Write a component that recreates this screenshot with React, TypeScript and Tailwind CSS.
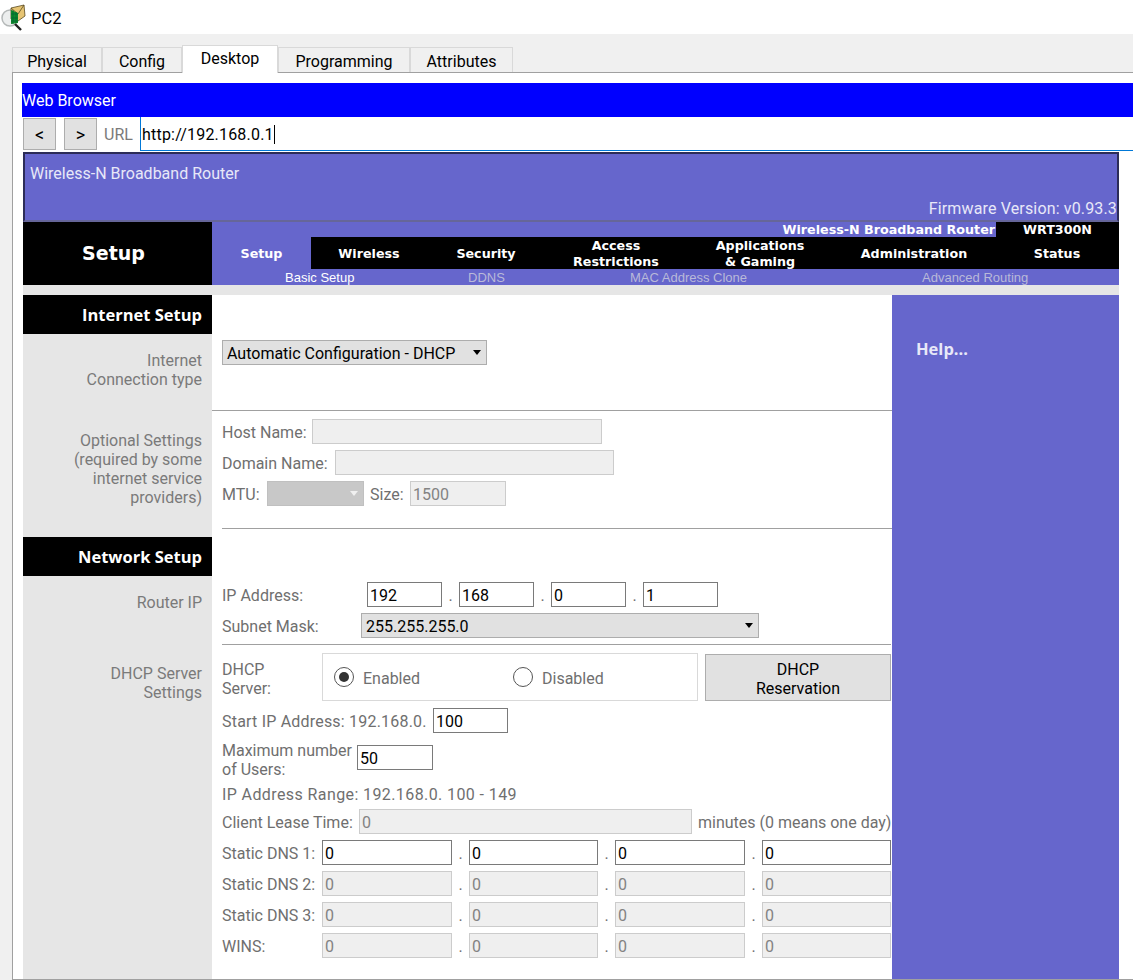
import type { ReactNode } from 'react'

const ui = "font-['Roboto','Liberation_Sans',sans-serif]"
const heading = "font-['Open_Sans','Liberation_Sans',sans-serif] font-bold"
const verdana = "font-['DejaVu_Sans',sans-serif] font-bold"

function PtIcon() {
  return (
    <svg width="29" height="30" viewBox="0 0 29 30" className="shrink-0">
      <circle cx="9" cy="16" r="8" fill="#eceeee" stroke="#b4b8b8" strokeWidth="1.5" />
      <path d="M14 22l6 6" stroke="#222" strokeWidth="2.4" />
      <path d="M10 6l13-3 1 11-7 5-7-2z" fill="#e6c473" stroke="#5a4a20" strokeWidth="0.8" />
      <path d="M10 6l7 6 6-9" fill="none" stroke="#5a4a20" strokeWidth="0.8" />
      <path d="M10 8l7 3v10l-7 1z" fill="#0f8a2a" />
      <path d="M10 12h7M10 16h7M10 19h7M12 8v14M15 10v11" stroke="#063" strokeWidth="0.7" />
    </svg>
  )
}

function Tab({ label, active, width }: { label: string; active?: boolean; width: string }) {
  if (active) {
    return (
      <div className={`${width} h-[28px] -mt-[2px] -mb-[1px] bg-white border border-b-0 border-[#d9d9d9] text-center text-[16px] leading-[25px] text-black relative`}>
        {label}
      </div>
    )
  }
  return (
    <div className={`${width} h-[25px] bg-[#f0f0f0] border border-b-0 border-[#d9d9d9] text-center text-[16px] leading-[27px] text-black`}>
      {label}
    </div>
  )
}

function Field({ value, width, off }: { value?: string; width: string; off?: boolean }) {
  return (
    <input
      readOnly
      value={value ?? ''}
      className={`${width} h-[25px] shrink-0 pl-[2px] pt-[2px] text-[16px] outline-none ${ui} ${
        off ? 'border border-[#cccccc] bg-[#efefef] text-[#838383]' : 'border border-[#7a7a7a] bg-white text-black'
      }`}
    />
  )
}

function Caret({ color = '#000' }: { color?: string }) {
  return (
    <svg width="8" height="5" viewBox="0 0 8 5" className="shrink-0">
      <path d="M0 0h8L4 5z" fill={color} />
    </svg>
  )
}

function Dropdown({ value, width, off }: { value?: string; width: string; off?: boolean }) {
  return (
    <div
      className={`${width} h-[25px] shrink-0 flex items-center justify-between pl-[4px] pr-[5px] text-[16px] ${
        off ? 'border border-[#c0c0c0] bg-[#c8c8c8]' : 'border border-[#adadad] bg-[#e1e1e1] text-black'
      }`}
    >
      <span className="pt-[2px]">{value}</span>
      <Caret color={off ? '#f0f0f0' : '#000'} />
    </div>
  )
}

function Row({ className, children }: { className: string; children: ReactNode }) {
  return <div className={`flex items-center text-[#6f6f6f] text-[16px] [&>span]:pt-[2px] ${className}`}>{children}</div>
}

function Dot({ width }: { width: string }) {
  return <span className={`${width} shrink-0 text-center text-[#6f6f6f]`}>.</span>
}

function DnsRow({ label, className, off }: { label: string; className: string; off?: boolean }) {
  return (
    <Row className={`h-[25px] ${className}`}>
      <span className="w-[100px] shrink-0">{label}</span>
      <Field value="0" width="w-[130px]" off={off} />
      <Dot width="w-[17px]" />
      <Field value="0" width="w-[129px]" off={off} />
      <Dot width="w-[17px]" />
      <Field value="0" width="w-[130px]" off={off} />
      <Dot width="w-[17px]" />
      <Field value="0" width="w-[129px]" off={off} />
    </Row>
  )
}

function Radio({ on }: { on?: boolean }) {
  return (
    <span className="w-[20px] h-[20px] shrink-0 rounded-full border border-[#555] bg-white flex items-center justify-center">
      {on && <span className="w-[10px] h-[10px] rounded-full bg-[#333]" />}
    </span>
  )
}

function SideHeading({ label }: { label: string }) {
  return (
    <div className={`h-[39px] bg-black text-white text-[16.5px] text-right pr-[10px] leading-[40px] ${heading}`}>{label}</div>
  )
}

function Sidebar() {
  return (
    <div className="w-[189px] shrink-0 bg-[#e6e6e6] text-right text-[16px] leading-[19px] text-[#7a7a7a]">
      <SideHeading label="Internet Setup" />
      <div className="h-[203px] pr-[10px] pt-[17px]">
        <p>Internet</p>
        <p>Connection type</p>
        <div className="h-[42px]" />
        <p>Optional Settings</p>
        <p>(required by some</p>
        <p>internet service</p>
        <p>providers)</p>
      </div>
      <SideHeading label="Network Setup" />
      <div className="pr-[10px] pt-[17px]">
        <p>Router IP</p>
        <div className="h-[52px]" />
        <p>DHCP Server</p>
        <p>Settings</p>
      </div>
    </div>
  )
}

function NavItem({ children, width, active }: { children: ReactNode; width: string; active?: boolean }) {
  return (
    <div className={`${width} shrink-0 text-center ${active ? 'bg-[#6666cc]' : ''}`}>{children}</div>
  )
}

export default function App() {
  return (
    <div className={`w-[1133px] h-[980px] overflow-hidden bg-[#f0f0f0] ${ui}`}>
      {/* window title */}
      <div className="h-[34px] bg-white flex items-center pl-[1px] gap-[1px] text-[16.5px] text-black">
        <PtIcon />
        <span className="pt-[4px]">PC2</span>
      </div>

      {/* tabs */}
      <div className="flex h-[38px] pl-[12px] pt-[13px]">
        <Tab label="Physical" width="w-[90px]" />
        <Tab label="Config" width="w-[80px]" />
        <Tab label="Desktop" width="w-[96px]" active />
        <Tab label="Programming" width="w-[132px]" />
        <Tab label="Attributes" width="w-[103px]" />
      </div>

      {/* device panel */}
      <div className="ml-[12px] h-[908px] bg-white border-t border-l border-b border-[#a0a0a0] pl-[9px] pt-[10px]">
        <div className="h-[34px] bg-[#0000ff] text-white text-[16px] leading-[36px]">Web Browser</div>
        <div className="h-[35px] flex items-start pl-[1px]">
          <button className="mt-[1px] w-[33px] h-[32px] bg-[#e1e1e1] border border-[#adadad] text-[18px] text-black">&lt;</button>
          <button className="mt-[1px] ml-[8px] w-[33px] h-[32px] bg-[#e1e1e1] border border-[#adadad] text-[18px] text-black">&gt;</button>
          <span className="ml-[7px] w-[36px] shrink-0 text-[16px] leading-[36px] text-[#7a7a7a]">URL</span>
          <div className="flex-1 h-[34px] bg-white border-l border-b border-[#0078d7] pl-[1px] pt-[2px] flex items-center text-[16px] tracking-[0.2px] text-black">
            http://192.168.0.1<span className="w-px h-[19px] bg-black" />
          </div>
        </div>

        {/* router page */}
        <div className="w-[1096px] ml-[1px] h-[827px]">
          <div className="h-[70px] bg-[#6666cc] border-2 border-t-[2px] border-[#2c2c58] border-b-[#666699] text-[#e8e8f8] text-[16px] flex flex-col justify-between pl-[5px]">
            <span className="leading-[19px] mt-[10px]">Wireless-N Broadband Router</span>
            <span className="self-end leading-[19px] mb-[2px] tracking-[0.15px]">Firmware Version: v0.93.3</span>
          </div>

          <div className="flex h-[63px]">
            <div className={`w-[189px] shrink-0 bg-black text-white text-[19px] leading-[63px] text-center pr-[8px] ${verdana}`}>Setup</div>
            <div className={`flex-1 bg-[#6666cc] text-white text-[12.7px] ${verdana}`}>
              <div className="h-[15px] flex justify-end leading-[15px]">
                <span className="pr-[1px] text-right">Wireless-N Broadband Router</span>
                <span className="w-[123px] bg-black text-center">WRT300N</span>
              </div>
              <div className="h-[32px] bg-black flex items-center pt-[2px] leading-[16px]">
                <NavItem width="w-[99px] self-stretch -mt-[2px] leading-[34px]" active>Setup</NavItem>
                <NavItem width="w-[116px]">Wireless</NavItem>
                <NavItem width="w-[118px]">Security</NavItem>
                <NavItem width="w-[142px]">Access<br />Restrictions</NavItem>
                <NavItem width="w-[146px]">Applications<br />&amp; Gaming</NavItem>
                <NavItem width="w-[162px]">Administration</NavItem>
                <NavItem width="w-[124px]">Status</NavItem>
              </div>
              <div className="h-[16px] flex leading-[18px] text-[13px] font-normal text-[#b9b9d9] font-['Liberation_Sans',sans-serif]">
                <span className="ml-[73px] w-[183px] text-white">Basic Setup</span>
                <span className="w-[162px]">DDNS</span>
                <span className="w-[292px]">MAC Address Clone</span>
                <span>Advanced Routing</span>
              </div>
            </div>
          </div>

          <div className="h-[10px] bg-[#e6e6e6]" />

          <div className="flex h-[684px]">
            <Sidebar />

            {/* form */}
            <div className="w-[680px] shrink-0 bg-white">
              <div className="ml-[10px] mt-[45px]">
                <Dropdown value="Automatic Configuration - DHCP" width="w-[265px]" />
              </div>
              <div className="h-px bg-[#a0a0a0] mt-[45px]" />

              <div className="pl-[10px]">
                <Row className="mt-[8px] h-[25px]">
                  <span className="w-[90px]">Host Name:</span>
                  <Field width="w-[290px]" off />
                </Row>
                <Row className="mt-[6px] h-[25px]">
                  <span className="w-[113px]">Domain Name:</span>
                  <Field width="w-[279px]" off />
                </Row>
                <Row className="mt-[6px] h-[25px]">
                  <span className="w-[45px]">MTU:</span>
                  <Dropdown width="w-[97px]" off />
                  <span className="ml-[6px] w-[40px]">Size:</span>
                  <Field value="1500" width="w-[96px]" off />
                </Row>
                <div className="h-px bg-[#a0a0a0] mt-[22px]" />

                <Row className="mt-[53px] h-[25px]">
                  <span className="w-[145px]">IP Address:</span>
                  <Field value="192" width="w-[75px]" />
                  <Dot width="w-[17px]" />
                  <Field value="168" width="w-[75px]" />
                  <Dot width="w-[17px]" />
                  <Field value="0" width="w-[75px]" />
                  <Dot width="w-[17px]" />
                  <Field value="1" width="w-[75px]" />
                </Row>
                <Row className="mt-[6px] h-[25px]">
                  <span className="w-[139px]">Subnet Mask:</span>
                  <Dropdown value="255.255.255.0" width="w-[398px]" />
                </Row>
                <div className="h-px bg-[#a0a0a0] mt-[6px] mr-[1px]" />

                <Row className="mt-[8px] h-[48px]">
                  <div className="w-[100px] leading-[19px] pt-[4px]">DHCP<br />Server:</div>
                  <div className="w-[376px] h-[48px] shrink-0 border border-[#d9d9d9] flex items-center pl-[11px]">
                    <Radio on />
                    <span className="ml-[9px] w-[150px] pt-[3px]">Enabled</span>
                    <Radio />
                    <span className="ml-[9px] pt-[3px]">Disabled</span>
                  </div>
                  <button className="ml-[7px] w-[186px] h-[47px] bg-[#e1e1e1] border border-[#adadad] text-black leading-[19px] pt-[4px]">
                    DHCP<br />Reservation
                  </button>
                </Row>
                <Row className="mt-[7px] h-[25px]">
                  <span className="w-[211px] tracking-[0.2px]">Start IP Address: 192.168.0.</span>
                  <Field value="100" width="w-[75px]" />
                </Row>
                <Row className="mt-[5px] h-[38px]">
                  <div className="w-[135px] leading-[19px] pt-[6px]">Maximum number<br />of Users:</div>
                  <Field value="50" width="w-[76px]" />
                </Row>
                <Row className="mt-[5px] h-[25px]">
                  <span className="tracking-[0.4px]">IP Address Range: 192.168.0. 100 - 149</span>
                </Row>
                <Row className="mt-[3px] h-[25px]">
                  <span className="w-[137px]">Client Lease Time:</span>
                  <Field value="0" width="w-[333px]" off />
                  <span className="ml-[6px] whitespace-nowrap">minutes (0 means one day)</span>
                </Row>
                <DnsRow label="Static DNS 1:" className="mt-[6px]" />
                <DnsRow label="Static DNS 2:" className="mt-[6px]" off />
                <DnsRow label="Static DNS 3:" className="mt-[6px]" off />
                <DnsRow label="WINS:" className="mt-[6px]" off />
              </div>
            </div>

            {/* help */}
            <div className={`flex-1 bg-[#6666cc] pl-[24px] pt-[44px] text-[16.5px] leading-[20px] text-[#e8e8f8] ${heading}`}>Help...</div>
          </div>
        </div>
      </div>
    </div>
  )
}
